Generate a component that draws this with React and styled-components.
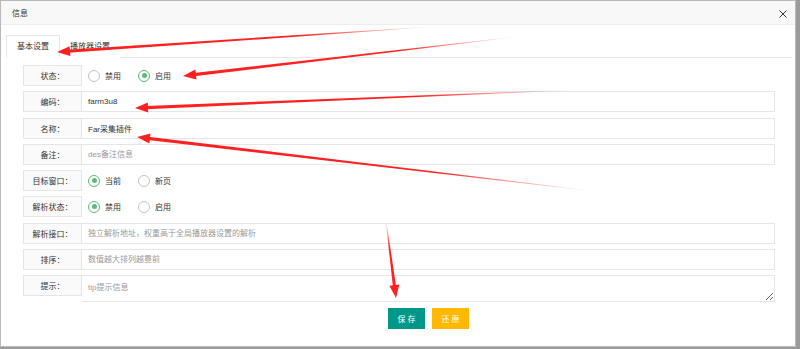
import React from "react";
import styled, { createGlobalStyle } from "styled-components";

const GlobalStyle = createGlobalStyle`
  html, body { margin: 0; padding: 0; }
  body {
    background: #9b9b9b;
    font-family: "Liberation Sans", "Noto Sans CJK SC", sans-serif;
    width: 800px;
    height: 349px;
    overflow: hidden;
  }
  * { box-sizing: border-box; }
`;

const Page = styled.div`
  position: relative;
  width: 800px;
  height: 349px;
`;

const Dialog = styled.div`
  width: 796px;
  height: 347px;
  background: #fff;
  border: 1px solid #b9b9b9;
  display: flex;
  flex-direction: column;
`;

const TitleBar = styled.div`
  height: 24px;
  flex: none;
  background: #f8f8f8;
  border-bottom: 1px solid #eeeeee;
  display: flex;
  align-items: center;
  justify-content: space-between;
  padding: 0 7px 0 11px;
  font-size: 8px;
  color: #333;
`;

const Close = styled.span`
  width: 10px;
  height: 10px;
  display: flex;
  align-items: center;
  justify-content: center;
  margin-top: 2px;
`;

const Tabs = styled.div`
  margin: 10px 3px 0 5px;
`;

const TabBar = styled.div`
  display: flex;
  height: 23px;
  border-bottom: 1px solid #e6e6e6;
`;

const Tab = styled.div`
  height: 23px;
  padding: 0 ${(p) => (p.$active ? 10 : 9)}px;
  font-size: 8px;
  line-height: 21px;
  color: #333;
  border: 1px solid ${(p) => (p.$active ? "#e6e6e6" : "transparent")};
  border-bottom-color: ${(p) => (p.$active ? "#fff" : "transparent")};
  background: #fff;
`;

const Form = styled.div`
  padding: 7px 17px 0 17px;
  display: flex;
  flex-direction: column;
`;

const Row = styled.div`
  display: flex;
  align-items: flex-start;
  min-height: 21px;
  margin-bottom: 5.25px;
`;

const Label = styled.div`
  width: 59px;
  height: 21px;
  flex: none;
  background: #fafafa;
  border: 1px solid #e6e6e6;
  font-size: 8px;
  color: #333;
  display: flex;
  align-items: center;
  justify-content: center;
`;

const Input = styled.input`
  flex: 1;
  height: 21px;
  border: 1px solid #e6e6e6;
  border-left: none;
  padding: 0 6px;
  font-family: inherit;
  font-size: 8px;
  color: #333;
  outline: none;
  background: #fff;
  &::placeholder { color: #999; }
`;

const TextArea = styled.textarea`
  flex: 1;
  height: 27px;
  min-height: 27px;
  border: 1px solid #e6e6e6;
  border-left: none;
  padding: 5px 6px;
  font-family: inherit;
  font-size: 8px;
  color: #333;
  outline: none;
  resize: vertical;
  &::placeholder { color: #999; }
`;

const RadioGroup = styled.div`
  display: flex;
  align-items: center;
  height: 21px;
  padding-left: 6px;
`;

const RadioItem = styled.div`
  display: flex;
  align-items: center;
  gap: 5px;
  width: 50px;
  font-size: 8px;
  color: #333;
`;

const Circle = styled.span`
  width: 12px;
  height: 12px;
  border-radius: 50%;
  border: 1px solid ${(p) => (p.$on ? "#5FB878" : "#c2c2c2")};
  display: flex;
  align-items: center;
  justify-content: center;
  &::after {
    content: "";
    width: 5px;
    height: 5px;
    border-radius: 50%;
    background: ${(p) => (p.$on ? "#5FB878" : "transparent")};
  }
`;

const ButtonRow = styled.div`
  display: flex;
  justify-content: center;
  gap: 7px;
  padding-left: 59px;
  margin-top: 0.75px;
`;

const Button = styled.button`
  width: 37px;
  height: 21px;
  border: none;
  padding: 0 0 0 2px;
  background: ${(p) => p.$bg};
  color: #fff;
  font-family: inherit;
  font-size: 8px;
  letter-spacing: 2px;
`;

const Overlay = styled.svg`
  position: absolute;
  left: 0;
  top: 0;
  pointer-events: none;
`;

function Radio({ on, children }) {
  return (
    <RadioItem>
      <Circle $on={on} />
      {children}
    </RadioItem>
  );
}

function Arrow({ id, x1, y1, x2, y2 }) {
  const dx = x2 - x1;
  const dy = y2 - y1;
  const len = Math.hypot(dx, dy);
  const ux = dx / len;
  const uy = dy / len;
  const nx = -uy;
  const ny = ux;
  const headLen = 13;
  const headW = 5;
  const bx = x2 - ux * headLen;
  const by = y2 - uy * headLen;
  const wTail = 0.3;
  const wHead = 1.6;
  const shaft = [
    [x1 + nx * wTail, y1 + ny * wTail],
    [bx + ux * 2 + nx * wHead, by + uy * 2 + ny * wHead],
    [bx + ux * 2 - nx * wHead, by + uy * 2 - ny * wHead],
    [x1 - nx * wTail, y1 - ny * wTail],
  ];
  const head = [
    [x2, y2],
    [bx + nx * headW, by + ny * headW],
    [bx - nx * headW, by - ny * headW],
  ];
  const pts = (a) => a.map((p) => p.join(",")).join(" ");
  return (
    <g>
      <defs>
        <linearGradient id={id} gradientUnits="userSpaceOnUse" x1={x1} y1={y1} x2={x2} y2={y2}>
          <stop offset="0" stopColor="#ff2020" stopOpacity="0" />
          <stop offset="0.35" stopColor="#ff2020" stopOpacity="1" />
          <stop offset="1" stopColor="#ff2020" stopOpacity="1" />
        </linearGradient>
      </defs>
      <polygon points={pts(shaft)} fill={`url(#${id})`} />
      <polygon points={pts(head)} fill="#ff2020" />
    </g>
  );
}

export default function App() {
  return (
    <Page>
      <GlobalStyle />
      <Dialog>
        <TitleBar>
          <span>信息</span>
          <Close>
            <svg width="8" height="8" viewBox="0 0 8 8">
              <path d="M0.5 0.5L7.5 7.5M7.5 0.5L0.5 7.5" stroke="#333" strokeWidth="1" />
            </svg>
          </Close>
        </TitleBar>
        <Tabs>
          <TabBar>
            <Tab $active>基本设置</Tab>
            <Tab>播放器设置</Tab>
          </TabBar>
          <Form>
            <Row>
              <Label>状态：</Label>
              <RadioGroup>
                <Radio>禁用</Radio>
                <Radio on>启用</Radio>
              </RadioGroup>
            </Row>
            <Row>
              <Label>编码：</Label>
              <Input readOnly spellCheck={false} defaultValue="farm3u8" />
            </Row>
            <Row>
              <Label>名称：</Label>
              <Input readOnly spellCheck={false} defaultValue="Far采集插件" />
            </Row>
            <Row>
              <Label>备注：</Label>
              <Input readOnly spellCheck={false} placeholder="des备注信息" />
            </Row>
            <Row>
              <Label>目标窗口：</Label>
              <RadioGroup>
                <Radio on>当前</Radio>
                <Radio>新页</Radio>
              </RadioGroup>
            </Row>
            <Row>
              <Label>解析状态：</Label>
              <RadioGroup>
                <Radio on>禁用</Radio>
                <Radio>启用</Radio>
              </RadioGroup>
            </Row>
            <Row>
              <Label>解析接口：</Label>
              <Input readOnly spellCheck={false} placeholder="独立解析地址，权重高于全局播放器设置的解析" />
            </Row>
            <Row>
              <Label>排序：</Label>
              <Input readOnly spellCheck={false} placeholder="数值越大排列越靠前" />
            </Row>
            <Row>
              <Label>提示：</Label>
              <TextArea readOnly spellCheck={false} placeholder="tip提示信息" />
            </Row>
            <ButtonRow>
              <Button $bg="#009688">保存</Button>
              <Button $bg="#FFB800">还原</Button>
            </ButtonRow>
          </Form>
        </Tabs>
      </Dialog>
      <Overlay width="800" height="349" viewBox="0 0 800 349">
        <Arrow id="a1" x1={428} y1={27} x2={57} y2={52} />
        <Arrow id="a2" x1={514} y1={37} x2={183} y2={76} />
        <Arrow id="a3" x1={572} y1={90} x2={135} y2={108} />
        <Arrow id="a4" x1={592} y1={191} x2={137} y2={137} />
        <Arrow id="a5" x1={386} y1={221} x2={396} y2={298} />
      </Overlay>
    </Page>
  );
}
